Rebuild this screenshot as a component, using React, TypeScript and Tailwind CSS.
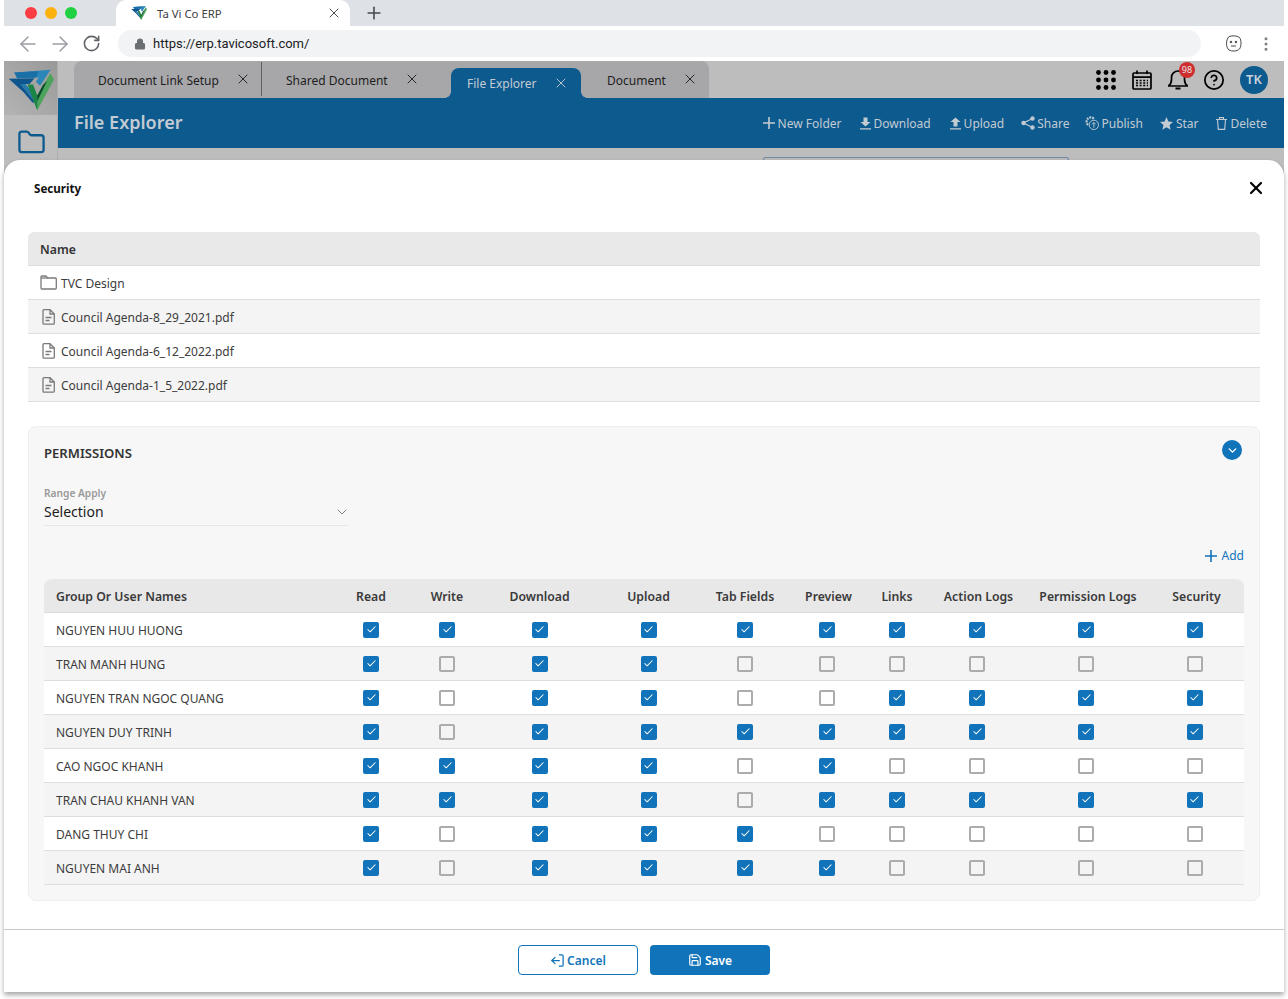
import React from "react";
import { ArrowLeft, ArrowRight, RotateCw, Lock, X, Plus, ChevronDown, LogOut, Save, CircleHelp, Folder, Check, MoreVertical } from "lucide-react";

function Logo({ size }: { size: number }) {
  return (
    <svg width={size} height={size} viewBox="0 0 132 120">
      <polygon points="18,10 122,2 104,30 92,48 80,36 88,24 28,26" fill="#2b86b9" />
      <polygon points="18,10 88,6 80,24 26,26" fill="#1a6fa6" />
      <polygon points="2,28 76,26 62,43 36,43 82,98 70,96 44,66" fill="#0f568f" />
      <polygon points="36,43 50,43 84,84 82,98" fill="#2479ad" />
      <polygon points="122,12 132,30 84,118 74,92" fill="#4ba35c" />
      <polygon points="56,44 72,44 84,76 84,118 74,92" fill="#1c8446" />
      <polygon points="112,34 84,92 84,76 100,46" fill="#0a4d2d" />
    </svg>
  );
}

function TinyPlus() {
  return (
    <svg width="12" height="12" viewBox="0 0 12 12" fill="none" stroke="currentColor" strokeWidth="1.6" className="mr-[3px] shrink-0">
      <path d="M6 0V12M0 6H12" />
    </svg>
  );
}

function DownIcon() {
  return (
    <svg width="11" height="13" viewBox="0 0 11 13" fill="currentColor" className="mr-[3px] shrink-0">
      <path d="M3.5 0.5H7.5V5H10.5L5.5 9.5L0.5 5H3.5ZM0 11.2H11V12.6H0Z" />
    </svg>
  );
}

function UpIcon() {
  return (
    <svg width="11" height="13" viewBox="0 0 11 13" fill="currentColor" className="mr-[3px] shrink-0">
      <path d="M5.5 0.5L10.5 5H7.5V9.5H3.5V5H0.5ZM0 11.2H11V12.6H0Z" />
    </svg>
  );
}

function ShareIcon() {
  return (
    <svg width="14" height="14" viewBox="0 0 14 14" fill="currentColor" stroke="currentColor" strokeWidth="1.2" className="mr-[2px] shrink-0">
      <path d="M11.5 2.5L2.5 7L11.5 11.5" fill="none" />
      <circle cx="2.5" cy="7" r="1.6" />
      <circle cx="11.5" cy="2.5" r="1.6" />
      <circle cx="11.5" cy="11.5" r="1.6" />
    </svg>
  );
}

function PublishIcon() {
  return (
    <svg width="14" height="14" viewBox="0 0 15 15" fill="none" stroke="currentColor" strokeWidth="1" className="mr-[2px] shrink-0">
      <circle cx="9.5" cy="9.5" r="5" />
      <path d="M9.5 12.5V7M7.5 9L9.5 7L11.5 9" />
      <path d="M3.2 9.5A4.5 4.5 0 1 1 9.5 2.8" strokeWidth="2.4" strokeDasharray="2 1" />
    </svg>
  );
}

function StarIcon() {
  return (
    <svg width="13" height="13" viewBox="0 0 13 13" fill="currentColor" className="mr-[3px] shrink-0">
      <polygon points="6.5,0 8.4,4.4 13,4.9 9.5,8 10.6,12.8 6.5,10.3 2.4,12.8 3.5,8 0,4.9 4.6,4.4" />
    </svg>
  );
}

function TrashIcon() {
  return (
    <svg width="11" height="13" viewBox="0 0 11 13" fill="none" stroke="currentColor" strokeWidth="1.1" className="mr-[4px] shrink-0">
      <path d="M0 2.5H11M3.5 2.5V0.6H7.5V2.5M1.5 2.5L2.3 12.4H8.7L9.5 2.5" />
    </svg>
  );
}

function DotsGrid() {
  return (
    <svg width="20" height="20" viewBox="0 0 20 20" fill="#000">
      {[2.5, 10, 17.5].flatMap((y) => [2.5, 10, 17.5].map((x) => <circle key={`${x}-${y}`} cx={x} cy={y} r="2.4" />))}
    </svg>
  );
}

function CalendarIcon() {
  return (
    <svg width="20" height="20" viewBox="0 0 20 20" fill="none" stroke="#000" strokeWidth="1.7">
      <rect x="1" y="3" width="18" height="16" rx="1" />
      <path d="M1 7.2H19M5 0.5V4M15 0.5V4" />
      <path d="M4 10.5H16M4 13H16M4 15.5H16" strokeDasharray="2 1.6" strokeWidth="1.5" />
    </svg>
  );
}

function BellIcon() {
  return (
    <svg width="20" height="21" viewBox="0 0 20 21" fill="none" stroke="#000" strokeWidth="1.7">
      <path d="M0.5 17H19.5C17.5 15.5 16.5 14 16.5 10.5V8.5A6.5 6.5 0 0 0 3.5 8.5V10.5C3.5 14 2.5 15.5 0.5 17Z" />
      <path d="M7.5 19.5H12.5" strokeWidth="2" />
    </svg>
  );
}

function FaceIcon() {
  return (
    <svg width="17" height="17" viewBox="0 0 17 17" fill="none" stroke="#444" strokeWidth="1">
      <path d="M4 1.5C7 .5 12 .5 14.5 2.5C16.5 5 16.5 11 14.5 14C12 16.5 7 16.5 4 15C.8 12.5.6 5 4 1.5Z" />
      <circle cx="6" cy="7" r=".8" fill="#444" />
      <circle cx="11" cy="7" r=".8" fill="#444" />
      <path d="M6 11H11" />
    </svg>
  );
}

function FolderOutline() {
  return (
    <svg width="17" height="15" viewBox="0 0 17 15" fill="none" stroke="#7a7a7a" strokeWidth="1.3" className="shrink-0">
      <path d="M1 13V2C1 1.3 1.3 1 2 1H6L7.5 3H15.5C16 3 16.3 3.3 16.3 4V13C16.3 13.7 16 14 15.5 14H2C1.3 14 1 13.7 1 13Z" />
      <path d="M1 3H7.5" />
    </svg>
  );
}

function DocOutline() {
  return (
    <svg width="17" height="16" viewBox="0 0 17 16" fill="none" stroke="#7a7a7a" strokeWidth="1.3" className="shrink-0">
      <path d="M3 1.8C3 1 3.4 .7 4 .7H10L14.3 5V14C14.3 14.8 13.9 15.2 13.2 15.2H4C3.4 15.2 3 14.8 3 14Z" />
      <path d="M10 .7V5H14.3" />
      <path d="M5.5 8.5H11.5M5.5 11.5H9.5" />
    </svg>
  );
}

function TabItem({ label, className, x }: { label: string; className: string; x: string }) {
  return (
    <div className={`flex items-center text-[12px] text-[#1d1d1d] ${className}`}>
      <span className="pt-[3px]">{label}</span>
      <X size={16} strokeWidth={1.4} className={x} />
    </div>
  );
}

function Action({ icon, label, className }: { icon: React.ReactNode; label: string; className: string }) {
  return (
    <div className={`flex items-center text-[12px] text-[#c3cbd2] ${className}`}>
      {icon}
      <span className="pt-[1px]">{label}</span>
    </div>
  );
}

function Box({ on }: { on: boolean }) {
  return on ? (
    <span className="flex h-4 w-4 items-center justify-center rounded-[2px] bg-[#1173ba]">
      <Check size={11} strokeWidth={2.2} className="text-white" />
    </span>
  ) : (
    <span className="block h-4 w-4 rounded-[2px] border-2 border-[#acacac] bg-transparent" />
  );
}

const people: [string, string][] = [
  ["NGUYEN HUU HUONG", "1111111111"],
  ["TRAN MANH HUNG", "1011000000"],
  ["NGUYEN TRAN NGOC QUANG", "1011001111"],
  ["NGUYEN DUY TRINH", "1011111111"],
  ["CAO NGOC KHANH", "1111010000"],
  ["TRAN CHAU KHANH VAN", "1111011111"],
  ["DANG THUY CHI", "1011100000"],
  ["NGUYEN MAI ANH", "1011110000"],
];

const heads: [string, string][] = [
  ["Read", ""],
  ["Write", ""],
  ["Download", ""],
  ["Upload", ""],
  ["Tab Fields", ""],
  ["Preview", "pl-[3px]"],
  ["Links", ""],
  ["Action Logs", "pl-[3px]"],
  ["Permission Logs", "pl-[4px]"],
  ["Security", "pl-[4px]"],
];

const files = [
  { name: "TVC Design", folder: true },
  { name: "Council Agenda-8_29_2021.pdf", folder: false },
  { name: "Council Agenda-6_12_2022.pdf", folder: false },
  { name: "Council Agenda-1_5_2022.pdf", folder: false },
];

const cols = "grid grid-cols-[289px_76px_76px_109px_109px_84px_80px_60px_100px_118px_99px]";

export default function App() {
  return (
    <div className="h-[999px] w-[1288px] overflow-hidden bg-white px-[4px] font-['Noto_Sans',sans-serif]">
      {/* Browser tab strip */}
      <div className="flex h-[26px] items-center bg-[#dee1e6]">
        <div className="ml-[21px] flex w-[91px] gap-[8px]">
          <span className="h-3 w-3 rounded-full bg-[#fc3d44]" />
          <span className="h-3 w-3 rounded-full bg-[#fdb10f]" />
          <span className="h-3 w-3 rounded-full bg-[#1fd040]" />
        </div>
        <div className="flex h-[26px] w-[234px] items-center rounded-t-[10px] bg-white pl-[15px] pr-[8px] text-[11.35px] text-[#3c4043]">
          <Logo size={16} />
          <span className="ml-[10px] flex-1 pt-[2px]">Ta Vi Co ERP</span>
          <X size={16} strokeWidth={1.4} />
        </div>
        <Plus size={20} strokeWidth={1.9} className="ml-[14px] text-[#45484d]" />
      </div>
      {/* Address bar */}
      <div className="flex h-[35px] items-center bg-white">
        <ArrowLeft size={24} strokeWidth={1.5} className="ml-[12px] text-[#9a9da1]" />
        <ArrowRight size={24} strokeWidth={1.5} className="ml-[8px] text-[#9a9da1]" />
        <RotateCw size={19} strokeWidth={2} className="ml-[10px] text-[#5f6368]" />
        <div className="ml-[17px] flex h-[27px] w-[1083px] items-center rounded-full bg-[#f1f3f4] pl-[16px] font-['Roboto',sans-serif] text-[13px] text-[#202124]">
          <Lock size={12} strokeWidth={2.2} className="fill-[#6b6e72] text-[#6b6e72]" />
          <span className="ml-[7px]">https://erp.tavicosoft.com/</span>
        </div>
        <div className="ml-[24px]"><FaceIcon /></div>
        <MoreVertical size={18} strokeWidth={2} className="ml-[15px] text-[#7c7f84]" />
      </div>
      {/* App header */}
      <div className="flex h-[99px] bg-[#bdbdbd]">
        <div className="flex w-[54px] shrink-0 flex-col border-r border-[#adadad]">
          <div className="flex h-[54px] items-center justify-center bg-gradient-to-tr from-[#b4b4b4] to-[#999999] pt-[3px]"><Logo size={46} /></div>
          <Folder size={29} strokeWidth={1.9} className="ml-[13px] mt-[13px] text-[#0d5a8f]" />
        </div>
        <div className="flex flex-1 flex-col">
          <div className="flex h-[37px] items-end">
            <div className="ml-[16px] flex h-[37px] w-[635px] items-end rounded-t-[8px] bg-[#a7a7aa]">
              <TabItem label="Document Link Setup" className="mb-[2px] h-[34px] w-[188px] border-r border-[#5f5f5f] pl-[24px]" x="ml-[16px]" />
              <TabItem label="Shared Document" className="mb-[2px] h-[34px] w-[189px] pl-[24px]" x="ml-[16px]" />
              <div className="relative flex h-[30px] w-[130px] items-center rounded-t-[8px] bg-[#0d5a8f] pl-[16px] text-[12px] text-[#c3cbd2]">
                <span className="absolute bottom-0 left-[-6px] h-[6px] w-[6px] bg-[radial-gradient(circle_at_0_0,#a7a7aa_5.5px,#0d5a8f_6px)]" />
                <span className="absolute bottom-0 right-[-6px] h-[6px] w-[6px] bg-[radial-gradient(circle_at_100%_0,#a7a7aa_5.5px,#0d5a8f_6px)]" />
                <span className="pt-[2px]">File Explorer</span>
                <X size={16} strokeWidth={1.4} className="ml-[16px]" />
              </div>
              <TabItem label="Document" className="mb-[2px] h-[34px] flex-1 pl-[26px]" x="ml-[16px]" />
            </div>
            <div className="ml-auto flex h-[37px] items-center pr-[16px]">
              <DotsGrid />
              <div className="ml-[16px]"><CalendarIcon /></div>
              <div className="relative ml-[16px]">
                <BellIcon />
                <span className="absolute left-[11px] top-[-7px] flex h-[16px] w-[16px] items-center justify-center rounded-full bg-[#cf2e2e] text-[9px] text-[#e6e6e6]">98</span>
              </div>
              <CircleHelp size={22} strokeWidth={1.9} className="ml-[15px]" />
              <span className="ml-[15px] flex h-7 w-7 items-center justify-center rounded-full bg-[#0d5a8f] text-[13px] font-semibold text-[#c8d2da]">TK</span>
            </div>
          </div>
          <div className="flex h-[50px] items-center bg-[#0d5a8f] pl-[16px] pr-[17px]">
            <span className="pb-[2px] text-[18px] font-semibold text-[#c3cbd2]">File Explorer</span>
            <div className="ml-auto flex items-center">
              <Action icon={<TinyPlus />} label="New Folder" className="" />
              <Action icon={<DownIcon />} label="Download" className="ml-[18px]" />
              <Action icon={<UpIcon />} label="Upload" className="ml-[19px]" />
              <Action icon={<ShareIcon />} label="Share" className="ml-[17px]" />
              <Action icon={<PublishIcon />} label="Publish" className="ml-[16px]" />
              <Action icon={<StarIcon />} label="Star" className="ml-[17px]" />
              <Action icon={<TrashIcon />} label="Delete" className="ml-[17px]" />
            </div>
          </div>
          <div className="flex-1">
            <div className="ml-[705px] mt-[9px] h-[3px] w-[306px] rounded-t-[3px] border-x border-t border-[#6f8ba3]" />
          </div>
        </div>
      </div>
      {/* Dialog */}
      <div className="bg-[#bdbdbd]">
        <div className="h-[832px] rounded-t-[16px] bg-white shadow-[0_3px_5px_rgba(0,0,0,0.35)]">
          <div className="flex h-[56px] items-center pl-[30px] pr-[18px]">
            <span className="pt-[1px] text-[11.6px] font-bold text-[#111]">Security</span>
            <X size={20} strokeWidth={2.6} className="ml-auto text-black" />
          </div>
          <div className="mx-[24px] mt-[16px]">
            <div className="flex h-[34px] items-center rounded-t-[6px] border-b border-[#dcdcdc] bg-[#e9e9e9] pl-[12px] pt-[3px] text-[12.25px] font-semibold text-[#333]">Name</div>
            {files.map((f, i) => (
              <div key={f.name} className={`flex h-[34px] items-center border-b border-[#dedede] pl-[12px] text-[12px] text-[#3c3c3c] ${i % 2 ? "bg-[#f4f4f4]" : "bg-white"}`}>
                {f.folder ? <FolderOutline /> : <DocOutline />}
                <span className="ml-[4px] pt-[3px]">{f.name}</span>
              </div>
            ))}
          </div>
          <div className="mx-[24px] mt-[24px] h-[475px] rounded-[8px] border border-[#eeeeee] bg-[#f7f7f7] px-[15px]">
            <div className="flex h-[53px] items-center justify-between">
              <span className="text-[13.1px] font-semibold text-[#333]">PERMISSIONS</span>
              <span className="mb-[7px] mr-[2px] flex h-5 w-5 items-center justify-center rounded-full bg-[#1173ba]">
                <ChevronDown size={13} strokeWidth={2.6} className="text-white" />
              </span>
            </div>
            <div className="mt-[6px] w-[304px]">
              <div className="text-[10.2px] font-semibold leading-[14px] text-[#999]">Range Apply</div>
              <div className="flex h-[26px] items-center justify-between border-b border-[#e6e6e6] pb-[2px] text-[14px] text-[#1c1c1c]">
                <span>Selection</span>
                <ChevronDown size={16} strokeWidth={1.4} className="-mr-[2px] text-[#777]" />
              </div>
            </div>
            <div className="mt-[20px] flex h-[20px] items-center justify-end text-[12px] text-[#1173ba]">
              <TinyPlus />
              <span className="ml-[2px]">Add</span>
            </div>
            <div className="mt-[13px]">
              <div className={`${cols} h-[34px] items-center rounded-t-[8px] border-b border-[#dcdcdc] bg-[#e8e8e8] text-[12.25px] font-semibold text-[#3a3a3a]`}>
                <span className="pl-[12px] pt-[4px]">Group Or User Names</span>
                {heads.map(([h, c]) => (
                  <span key={h} className={`pt-[4px] text-center ${c}`}>{h}</span>
                ))}
              </div>
              {people.map(([name, flags], i) => (
                <div key={name} className={`${cols} h-[34px] items-center border-b border-[#dedede] text-[12px] text-[#3c3c3c] ${i % 2 ? "bg-[#f4f4f4]" : "bg-white"}`}>
                  <span className="pl-[12px] pt-[3px]">{name}</span>
                  {flags.split("").map((c, j) => (
                    <span key={j} className="flex justify-center"><Box on={c === "1"} /></span>
                  ))}
                </div>
              ))}
            </div>
          </div>
          <div className="mt-[28px] flex h-[63px] items-start justify-center border-t border-[#c8c8c8] pt-[15px]">
            <button className="flex h-[30px] w-[120px] items-center justify-center rounded-[4px] border border-[#1173ba] bg-white text-[12px] font-semibold text-[#1173ba]">
              <LogOut size={15} strokeWidth={2} className="mr-[2px] -scale-x-100" />
              <span className="pt-[1px]">Cancel</span>
            </button>
            <button className="ml-[12px] flex h-[30px] w-[120px] items-center justify-center rounded-[4px] bg-[#1173ba] text-[12px] font-semibold text-white">
              <Save size={14} strokeWidth={2} className="mr-[3px]" />
              <span className="pt-[1px]">Save</span>
            </button>
          </div>
        </div>
      </div>
    </div>
  );
}
